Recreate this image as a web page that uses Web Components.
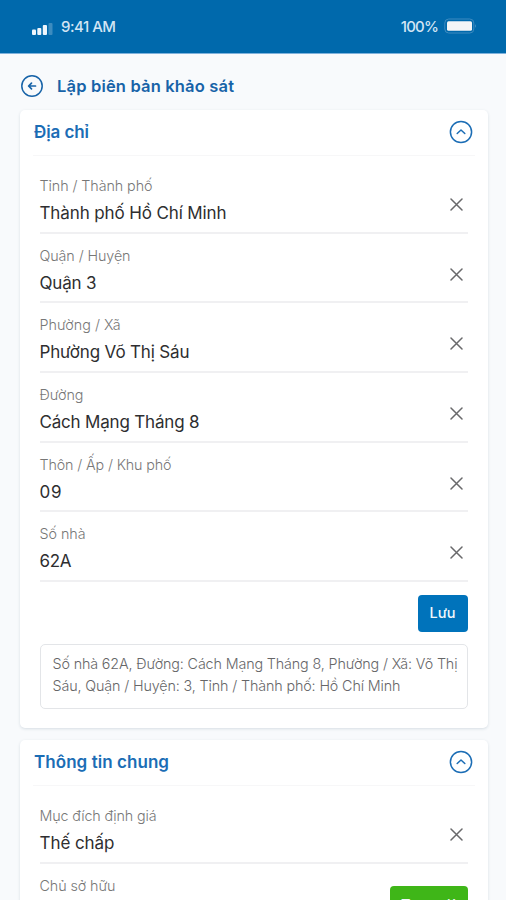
<!DOCTYPE html>
<html lang="vi"><head><meta charset="utf-8"><title>Lập biên bản khảo sát</title>
<style>
html,body{margin:0;height:900px;overflow:hidden;background:#f8fafc;font-family:Inter,"Noto Sans",sans-serif}
</style></head><body>
<script>
const define=(name,html,init)=>customElements.define(name,class extends HTMLElement{
  connectedCallback(){
    if(this.shadowRoot)return;
    this.attachShadow({mode:'open'}).innerHTML=html(this);
    if(init)init(this);
  }
});
const a=(e,n)=>e.getAttribute(n)||'';

/* Single line of text whose tracking is adjusted to a given width */
define('fit-text',e=>`<style>:host{display:inline-block;white-space:nowrap}span{display:inline-block}</style><span>${a(e,'text')}</span>`,e=>{
  const s=e.shadowRoot.querySelector('span'),n=[...a(e,'text')].length,w=+a(e,'width');
  if(w)s.style.letterSpacing=((w-s.getBoundingClientRect().width)/(n-1)).toFixed(3)+'px';
});

define('status-bar',()=>`<style>
:host{display:flex;box-sizing:border-box;height:54px;padding:1px 29px 0 32px;background:#0069ac;border-bottom:1px solid #7fb2dc;color:#d3e5f4;align-items:center;justify-content:space-between;font:500 15px/20px Inter,sans-serif}
div{display:flex;align-items:center}svg{display:block}
</style><div style="gap:8px"><svg width="21" height="14" style="margin-top:3px"><g fill="#eef6fc"><rect x="0" y="7.500" width="4" height="5.500" rx="1"/><rect x="5.300" y="6" width="4" height="7" rx="1"/><rect x="10.800" y="3" width="4.200" height="10" rx="1"/></g><rect x="16.500" y="1" width="4" height="12" rx="1" fill="#3c8cbf"/></svg><fit-text text="9:41 AM" width="55"></fit-text></div>
<div style="gap:6px"><fit-text text="100%" width="38"></fit-text><svg width="33" height="16" style="margin-top:-2px"><rect x=".8" y="1" width="29" height="14" rx="4" fill="none" stroke="#3d8bc0"/><rect x="3" y="3.300" width="25" height="9.500" rx="1.500" fill="#f3f5f7"/><path d="M31.300 6v4q1.500-2 0-4" fill="#5d9fcb"/></svg></div>`);

define('page-title',e=>`<style>
:host{display:flex;box-sizing:border-box;height:56px;padding:8px 20px 0 21px;gap:14px;align-items:center;color:#1763a8;font:600 16.500px/24px Inter,sans-serif}svg{display:block}
</style><svg width="22" height="22" fill="none" stroke="currentColor" stroke-width="1.500" stroke-linecap="round" stroke-linejoin="round"><circle cx="11" cy="11" r="10.200"/><path d="M14.500 11H7.700M10.500 8.200L7.600 11L10.500 13.800" stroke-width="1.700"/></svg><fit-text text="${a(e,'text')}" width="177"></fit-text>`);

define('section-card',e=>`<style>
:host{display:block;box-sizing:border-box;margin:0 18px 12px 20px;background:#fff;border-radius:5px;box-shadow:0 1px 3px #1e3c5a26}
header{display:flex;box-sizing:border-box;height:46px;margin:0 13px;padding:0 2px 1px 1px;align-items:center;justify-content:space-between;border-bottom:1px solid #f7f7f8;color:#1b6db5;font:600 17px/24px Inter,sans-serif}
main{padding:8px 20.500px 19.500px 19.500px}svg{display:block}
</style><header><fit-text text="${a(e,'heading')}" width="${a(e,'w')}"></fit-text><svg width="24" height="24" fill="none" stroke="currentColor" stroke-width="1.500" stroke-linecap="round" stroke-linejoin="round"><circle cx="12" cy="12" r="10.600"/><path d="M8.200 13.500L12 10l3.800 3.500"/></svg></header><main><slot></slot></main>`);

define('form-field',e=>`<style>
:host{display:flex;box-sizing:border-box;height:69.670px;padding:11px 5px 0 0;justify-content:space-between;border-bottom:2px solid #f0f0f2}
.label{display:block;color:#777;font:300 14.300px/22px Inter,sans-serif}
.value{display:block;margin-top:4px;color:#2e2e30;font:400 17px/24px Inter,sans-serif}
svg{display:block;margin-top:23px}
</style><div><fit-text class="label" text="${a(e,'label')}" width="${a(e,'lw')}"></fit-text><fit-text class="value" text="${a(e,'value')}" width="${a(e,'vw')}"></fit-text></div>${e.hasAttribute('open')?'<slot></slot>':'<svg width="13" height="13" stroke="#69696b" stroke-width="1.500" stroke-linecap="round"><path d="M1 1l11 11M12 1L1 12"/></svg>'}`);

define('action-button',e=>`<style>
:host{display:flex;box-sizing:border-box;width:50px;height:37px;align-items:center;justify-content:center;border-radius:4px;background:#0073bb;color:#f1f7fb;font:500 14.500px/20px Inter,sans-serif}
:host([green]){width:78px;background:#3fb618;margin:11px -5px 0 0}
</style><fit-text text="${a(e,'text')}" width="${a(e,'w')}"></fit-text>`);

define('address-summary',()=>`<style>
:host{display:block;box-sizing:border-box;height:65px;margin-top:12px;padding:8px 0 0 12px;border:1.500px solid #e3e5e8;border-radius:5px;color:#666668;font:300 14.300px/22px Inter,sans-serif}
fit-text{display:block}
</style><fit-text text="Số nhà 62A, Đường: Cách Mạng Tháng 8, Phường / Xã: Võ Thị" width="405"></fit-text><fit-text text="Sáu, Quận / Huyện: 3, Tỉnh / Thành phố: Hồ Chí Minh" width="348"></fit-text>`);

define('survey-page',()=>`<style>:host{display:block;height:900px;overflow:hidden}.actions{display:flex;justify-content:flex-end;padding-top:13px}</style>
<status-bar></status-bar><page-title text="Lập biên bản khảo sát"></page-title>
<section-card heading="Địa chỉ" w="55">
<form-field label="Tỉnh / Thành phố" lw="113" value="Thành phố Hồ Chí Minh" vw="187"></form-field>
<form-field label="Quận / Huyện" lw="91" value="Quận 3" vw="57"></form-field>
<form-field label="Phường / Xã" lw="81" value="Phường Võ Thị Sáu" vw="150"></form-field>
<form-field label="Đường" lw="44" value="Cách Mạng Tháng 8" vw="160"></form-field>
<form-field label="Thôn / Ấp / Khu phố" lw="132" value="09" vw="22"></form-field>
<form-field label="Số nhà" lw="46" value="62A" vw="32"></form-field>
<div class="actions"><action-button text="Lưu" w="26"></action-button></div>
<address-summary></address-summary>
</section-card>
<section-card heading="Thông tin chung" w="135">
<form-field label="Mục đích định giá" lw="117" value="Thế chấp" vw="75"></form-field>
<form-field label="Chủ sở hữu" lw="76" value="" open><action-button green text="Tạo mới" w="55"></action-button></form-field>
</section-card>`);
document.body.append(document.createElement('survey-page'));
</script></body></html>
